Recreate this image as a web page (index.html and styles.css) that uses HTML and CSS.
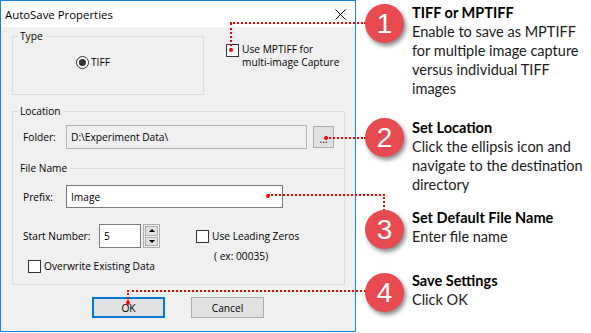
FILE: index.html
```html
<!DOCTYPE html>
<html lang="en">
<head>
  <meta charset="UTF-8">
  <title>AutoSave Properties</title>
  <link rel="stylesheet" href="styles.css">
</head>
<body>
  <div class="page">
    <div class="dialog">
      <div class="titlebar">
        <span class="title">AutoSave Properties</span>
        <svg class="close" width="11" height="11" viewBox="0 0 11 11">
          <path d="M0.5 0.5 L10.5 10.5 M10.5 0.5 L0.5 10.5" stroke="#000" stroke-width="1" fill="none"/>
        </svg>
      </div>

      <div class="dialog-body">
        <div class="row-top">
          <fieldset class="group group-type">
            <legend>Type</legend>
            <label class="radio-opt"><span class="radio"></span>TIFF</label>
          </fieldset>
          <label class="check-opt mptiff">
            <span class="check"></span>
            <span>Use MPTIFF for<br>multi-image Capture</span>
          </label>
        </div>

        <fieldset class="group group-location">
          <legend>Location</legend>
          <div class="field-row">
            <span class="field-label">Folder:</span>
            <div class="input input-folder">D:\Experiment Data\</div>
            <button class="btn-browse">...</button>
          </div>

          <div class="subhead">
            <span>File Name</span>
            <span class="subhead-line"></span>
          </div>

          <div class="field-row prefix-row">
            <span class="field-label">Prefix:</span>
            <div class="input input-prefix">Image</div>
          </div>

          <div class="number-row">
            <div class="number-left">
              <div class="start-num">
                <span class="field-label wide">Start Number:</span>
                <div class="input input-num">5</div>
                <div class="spin">
                  <span class="spin-btn"><span class="tri up"></span></span>
                  <span class="spin-btn"><span class="tri down"></span></span>
                </div>
              </div>
              <label class="check-opt overwrite"><span class="check"></span>Overwrite Existing Data</label>
            </div>
            <div class="number-right">
              <label class="check-opt"><span class="check"></span>Use Leading Zeros</label>
              <div class="hint">( ex: 00035)</div>
            </div>
          </div>
        </fieldset>

        <div class="buttons">
          <button class="btn btn-default">OK</button>
          <button class="btn">Cancel</button>
        </div>
      </div>
    </div>

    <!-- dotted leader lines from the controls to the numbered notes -->
    <div class="leaders">
      <span class="dot dot-1"></span>
      <span class="lead v lead-1v"></span>
      <span class="lead h lead-1h"></span>
      <span class="dot dot-2"></span>
      <span class="lead h lead-2h"></span>
      <span class="dot dot-3"></span>
      <span class="lead h lead-3h"></span>
      <span class="lead v lead-3v"></span>
      <span class="dot dot-4"></span>
      <span class="lead v lead-4v"></span>
      <span class="lead h lead-4h"></span>
    </div>

    <div class="notes">
      <div class="note note-1">
        <span class="badge">1</span>
        <div class="note-text">
          <b>TIFF or MPTIFF</b><br>
          Enable to save as MPTIFF<br>
          for multiple image capture<br>
          versus individual TIFF<br>
          images
        </div>
      </div>
      <div class="note note-2">
        <span class="badge">2</span>
        <div class="note-text">
          <b>Set Location</b><br>
          Click the ellipsis icon and<br>
          navigate to the destination<br>
          directory
        </div>
      </div>
      <div class="note note-3">
        <span class="badge">3</span>
        <div class="note-text">
          <b>Set Default File Name</b><br>
          Enter file name
        </div>
      </div>
      <div class="note note-4">
        <span class="badge">4</span>
        <div class="note-text">
          <b>Save Settings</b><br>
          Click OK
        </div>
      </div>
    </div>
  </div>
</body>
</html>
```

FILE: styles.css
```css
body {
  margin: 0;
  background: #fff;
}

.page {
  position: relative;
  display: flex;
  width: 591px;
  height: 333px;
}

/* ---------- dialog ---------- */

.dialog {
  width: 356px;
  height: 332px;
  box-sizing: border-box;
  border: 1px solid #1883d7;
  background: #f0f0f0;
  font-family: "Open Sans", "Noto Sans", sans-serif;
  font-size: 10.2px;
  color: #000;
  display: flex;
  flex-direction: column;
}

.titlebar {
  height: 26px;
  background: #fff;
  display: flex;
  align-items: center;
  justify-content: space-between;
  padding: 0 9px 0 4px;
}

.title {
  font-size: 11.4px;
}

.dialog-body {
  padding: 2px 0 0 11px;
}

.group {
  margin: 0;
  padding: 0;
  border: 1px solid #dcdcdc;
  box-sizing: border-box;
  min-width: 0;
}

.group legend {
  padding: 0 2px;
  margin-left: 5px;
  line-height: 14px;
}

.row-top {
  display: flex;
  align-items: flex-start;
}

.group-type {
  width: 192px;
  padding-bottom: 25px;
}

.group-type .radio-opt {
  margin: 12px 0 0 63px;
}

.radio-opt,
.check-opt {
  display: flex;
  align-items: center;
  line-height: 14px;
}

.radio {
  width: 11px;
  height: 11px;
  border: 1px solid #333;
  border-radius: 50%;
  background: #fff;
  margin-right: 2px;
  display: flex;
  align-items: center;
  justify-content: center;
}

.radio::after {
  content: "";
  width: 7px;
  height: 7px;
  border-radius: 50%;
  background: #333;
}

.check {
  width: 11px;
  height: 11px;
  border: 1px solid #333;
  background: #fff;
  margin-right: 3px;
  flex: none;
}

.mptiff {
  align-items: flex-start;
  margin: 14px 0 0 22px;
  line-height: 13px;
}

.mptiff .check {
  margin-top: 1px;
}

.group-location {
  width: 333px;
  margin-top: 9px;
  padding: 7px 0 11px 10px;
}

.group-location legend {
  margin-left: -5px;
}

.field-row {
  display: flex;
  align-items: center;
  height: 24px;
}

.field-label {
  width: 43px;
  flex: none;
}

.field-label.wide {
  width: 76px;
}

.input {
  box-sizing: border-box;
  height: 24px;
  border: 1px solid #7a7a7a;
  background: #fff;
  padding: 0 4px;
  display: flex;
  align-items: center;
}

.input-folder {
  width: 241px;
  background: #f0f0f0;
  border-color: #b4b4b4;
}

.btn-browse {
  width: 21px;
  height: 22px;
  margin-left: 6px;
  padding: 0 0 3px;
  border: 1px solid #adadad;
  background: #e1e1e1;
  font: inherit;
  line-height: 1;
  display: flex;
  align-items: flex-end;
  justify-content: center;
}

.subhead {
  display: flex;
  align-items: center;
  margin: 12px 0 0 -3px;
  line-height: 14px;
}

.subhead-line {
  flex: 1;
  border-top: 1px solid #dcdcdc;
  margin-left: 3px;
}

.prefix-row {
  margin-top: 10px;
  height: 23px;
}

.input-prefix {
  width: 217px;
  height: 23px;
}

.number-row {
  display: flex;
  margin-top: 16px;
}

.start-num {
  display: flex;
  align-items: center;
  height: 24px;
}

.input-num {
  width: 42px;
}

.spin {
  margin-left: 2px;
  width: 17px;
  height: 24px;
  box-sizing: border-box;
  border: 1px solid #adadad;
  display: flex;
  flex-direction: column;
  gap: 1px;
  padding: 1px;
  background: #f0f0f0;
}

.spin-btn {
  flex: 1;
  border: 1px solid #adadad;
  background: #e1e1e1;
  display: flex;
  align-items: center;
  justify-content: center;
}

.tri {
  width: 0;
  height: 0;
  border-left: 3px solid transparent;
  border-right: 3px solid transparent;
}

.tri.up {
  border-bottom: 3px solid #000;
}

.tri.down {
  border-top: 3px solid #000;
}

.overwrite {
  margin: 11px 0 0 5px;
}

.number-right {
  margin: 5px 0 0 36px;
}

.hint {
  margin: 6px 0 0 18px;
  line-height: 14px;
}

.buttons {
  display: flex;
  justify-content: center;
  gap: 26px;
  margin: 12px 0 0 -11px;
}

.btn {
  width: 73px;
  height: 21px;
  box-sizing: border-box;
  border: 1px solid #adadad;
  background: #e1e1e1;
  font: inherit;
  padding: 0;
}

.btn-default {
  border: 2px solid #0078d7;
}

/* ---------- leader lines ---------- */

.leaders {
  position: absolute;
  inset: 0;
  pointer-events: none;
}

.lead {
  position: absolute;
}

.lead.h {
  height: 0;
  border-top: 2px dotted #f00;
}

.lead.v {
  width: 0;
  border-left: 2px dotted #f00;
}

.dot {
  position: absolute;
  width: 4px;
  height: 4px;
  border-radius: 50%;
  background: #f00;
}

.dot-1 { left: 229px; top: 48px; }
.lead-1v { left: 230px; top: 23px; height: 27px; }
.lead-1h { left: 230px; top: 22px; width: 136px; }

.dot-2 { left: 324px; top: 136px; }
.lead-2h { left: 326px; top: 137px; width: 40px; }

.dot-3 { left: 266px; top: 194px; }
.lead-3h { left: 268px; top: 194px; width: 117px; }
.lead-3v { left: 383px; top: 194px; height: 17px; }

.dot-4 { left: 126px; top: 301px; }
.lead-4v { left: 127px; top: 290px; height: 12px; }
.lead-4h { left: 127px; top: 290px; width: 239px; }

/* ---------- notes ---------- */

.notes {
  position: relative;
  z-index: 1;
  padding: 3px 0 0 9px;
  font-family: Lato, "Open Sans", sans-serif;
  font-size: 14.5px;
  line-height: 19px;
  color: #1a1a1a;
}

.note {
  display: flex;
  align-items: flex-start;
}

.note-2 { margin-top: 20px; }
.note-3 { margin-top: 14px; }
.note-4 { margin-top: 22px; }

.badge {
  flex: none;
  width: 39px;
  height: 39px;
  margin-right: 8px;
  border-radius: 50%;
  background: #e84b4f;
  box-shadow: 2px 3px 4px rgba(0, 0, 0, 0.45);
  color: #fff;
  font-family: "Liberation Sans", Arial, sans-serif;
  font-size: 28px;
  line-height: 39px;
  text-align: center;
}

.note-1 .badge { margin-top: 1px; }
.note-3 .badge,
.note-4 .badge { margin-top: 2px; }

.note-text {
  white-space: nowrap;
}

.note-text b {
  color: #000;
}
```
